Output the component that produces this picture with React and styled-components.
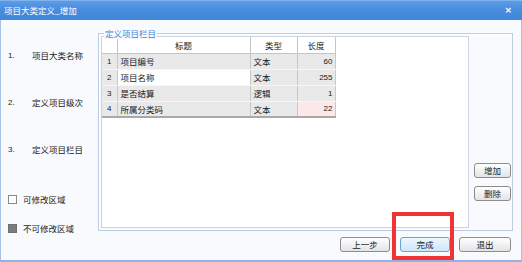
import React from "react";
import styled, { createGlobalStyle } from "styled-components";

const Global = createGlobalStyle`
  html, body { margin: 0; padding: 0; background: #ffffff; }
  body { font-family: "Noto Sans CJK SC", "Noto Sans", sans-serif; }
  * { box-sizing: border-box; }
`;

const Window = styled.div`
  position: relative;
  width: 522px;
  height: 262px;
  display: flex;
  flex-direction: column;
  font-size: 8.5px;
  color: #1a1a1a;
`;

const TitleBar = styled.div`
  height: 20px;
  flex: none;
  display: flex;
  align-items: center;
  justify-content: space-between;
  padding: 0 10px 0 4px;
  background: linear-gradient(#5c9ce6 0%, #4a8edf 40%, #3f86da 100%);
  border-top: 1px solid #7fb3ee;
  color: #fff;
`;

const TitleText = styled.span`
  font-size: 8.5px;
  line-height: 1;
`;

const Close = styled.span`
  font-family: "DejaVu Sans", sans-serif;
  font-weight: bold;
  font-size: 9px;
  line-height: 1;
`;

const Body = styled.div`
  flex: 1;
  display: flex;
  flex-direction: column;
  background: #f8fafd;
  border: 1px solid #a6c2e7;
  border-top: none;
  border-bottom: 2px solid #8fb3e2;
`;

const Main = styled.div`
  display: flex;
  height: 211px;
`;

const Sidebar = styled.div`
  width: 97px;
  flex: none;
  display: flex;
  flex-direction: column;
  padding: 29px 0 0 7px;
`;

const Step = styled.div`
  display: flex;
  align-items: center;
  height: 12px;
  margin-bottom: ${(p) => p.$gap}px;
  color: #222;
`;

const StepNo = styled.span`
  width: 24px;
  font-family: "Liberation Sans", sans-serif;
  font-size: 8px;
`;

const LegendItem = styled.div`
  display: flex;
  align-items: center;
  height: 12px;
  margin-top: ${(p) => p.$top}px;
  gap: 6px;
  color: #222;
`;

const Swatch = styled.span`
  width: 9px;
  height: 9px;
  border: 1px solid ${(p) => (p.$filled ? "#6f6f6f" : "#8a8a8a")};
  background: ${(p) => (p.$filled ? "#7c7c7c" : "#ffffff")};
`;

const Frame = styled.div`
  position: relative;
  margin-top: 13px;
  width: 415px;
  height: 198px;
  border: 1px solid #bccde4;
  box-shadow: inset 1px 1px 0 #ffffff;
  display: flex;
  padding: 2px 0 0 2px;
`;

const FrameLegend = styled.span`
  position: absolute;
  top: -7px;
  left: 5px;
  padding: 0 1px;
  background: #f8fafd;
  color: #3f86d8;
  font-size: 8.5px;
  line-height: 12px;
`;

const GridArea = styled.div`
  width: 368px;
  height: 192px;
  background: #ffffff;
  border: 1px solid #c9d5e4;
`;

const Table = styled.table`
  border-collapse: collapse;
  table-layout: fixed;
  width: 233px;
  font-size: 8.5px;
  border-bottom: 2px solid #a9a9a9;
`;

const Th = styled.th`
  height: 16px;
  padding: 0;
  font-weight: normal;
  text-align: center;
  background: #ffffff;
  border-right: 1px solid #c4c4c4;
  border-bottom: 1px solid #c4c4c4;
  color: #222;
`;

const Td = styled.td`
  height: 16px;
  padding: 0 ${(p) => (p.$align === "right" ? "2px" : "0")} 0
    ${(p) => (p.$align === "center" ? "0" : "3px")};
  text-align: ${(p) => p.$align || "left"};
  background: ${(p) => p.$bg || "#e9e9e9"};
  border-right: 1px solid #c8c8c8;
  border-bottom: 1px solid #f6f6f6;
  white-space: nowrap;
  font-family: ${(p) =>
    p.$num ? '"Liberation Sans", sans-serif' : "inherit"};
  font-size: ${(p) => (p.$num ? "8px" : "8.5px")};
  color: #1a1a1a;
`;

const SideCol = styled.div`
  display: flex;
  flex-direction: column;
  gap: 8px;
  padding: 127px 0 0 5px;
`;

const Button = styled.button`
  width: ${(p) => p.$w}px;
  height: 15px;
  padding: 0;
  font-family: "Noto Sans CJK SC", sans-serif;
  font-size: 8.5px;
  line-height: 1;
  color: #1a1a1a;
  border: 1px solid ${(p) => (p.$primary ? "#6aa3d9" : "#8c8c8c")};
  border-radius: 3px;
  background: ${(p) =>
    p.$primary
      ? "linear-gradient(#eef7fe, #cfe6f9)"
      : "linear-gradient(#ffffff, #e4e4e4)"};
`;

const Footer = styled.div`
  display: flex;
  justify-content: flex-end;
  align-items: flex-start;
  padding: 6px 10px 0 0;
`;

const FooterGap = styled.span`
  width: ${(p) => p.$w}px;
`;

const Highlight = styled.div`
  position: absolute;
  left: 392px;
  top: 212px;
  width: 62px;
  height: 48px;
  border: 4px solid #f03434;
  pointer-events: none;
`;

const rows = [
  { n: 1, title: "项目编号", type: "文本", len: "60" },
  { n: 2, title: "项目名称", type: "文本", len: "255", titleBg: "#ffffff" },
  { n: 3, title: "是否结算", type: "逻辑", len: "1" },
  { n: 4, title: "所属分类码", type: "文本", len: "22", lenBg: "#fbe9ea" },
];

export default function App() {
  return (
    <>
      <Global />
      <Window>
        <TitleBar>
          <TitleText>项目大类定义_增加</TitleText>
          <Close>×</Close>
        </TitleBar>
        <Body>
          <Main>
            <Sidebar>
              <Step $gap={35}>
                <StepNo>1.</StepNo>项目大类名称
              </Step>
              <Step $gap={35}>
                <StepNo>2.</StepNo>定义项目级次
              </Step>
              <Step $gap={0}>
                <StepNo>3.</StepNo>定义项目栏目
              </Step>
              <LegendItem $top={38}>
                <Swatch />
                可修改区域
              </LegendItem>
              <LegendItem $top={17}>
                <Swatch $filled />
                不可修改区域
              </LegendItem>
            </Sidebar>
            <Frame>
              <FrameLegend>定义项目栏目</FrameLegend>
              <GridArea>
                <Table>
                  <colgroup>
                    <col style={{ width: 15 }} />
                    <col style={{ width: 133 }} />
                    <col style={{ width: 47 }} />
                    <col style={{ width: 38 }} />
                  </colgroup>
                  <thead>
                    <tr>
                      <Th />
                      <Th>标题</Th>
                      <Th>类型</Th>
                      <Th>长度</Th>
                    </tr>
                  </thead>
                  <tbody>
                    {rows.map((r) => (
                      <tr key={r.n}>
                        <Td $align="center" $num>
                          {r.n}
                        </Td>
                        <Td $bg={r.titleBg}>{r.title}</Td>
                        <Td>{r.type}</Td>
                        <Td $align="right" $num $bg={r.lenBg}>
                          {r.len}
                        </Td>
                      </tr>
                    ))}
                  </tbody>
                </Table>
              </GridArea>
              <SideCol>
                <Button $w={37}>增加</Button>
                <Button $w={37}>删除</Button>
              </SideCol>
            </Frame>
          </Main>
          <Footer>
            <Button $w={50}>上一步</Button>
            <FooterGap $w={10} />
            <Button $w={50} $primary>
              完成
            </Button>
            <FooterGap $w={9} />
            <Button $w={52}>退出</Button>
          </Footer>
        </Body>
        <Highlight />
      </Window>
    </>
  );
}
